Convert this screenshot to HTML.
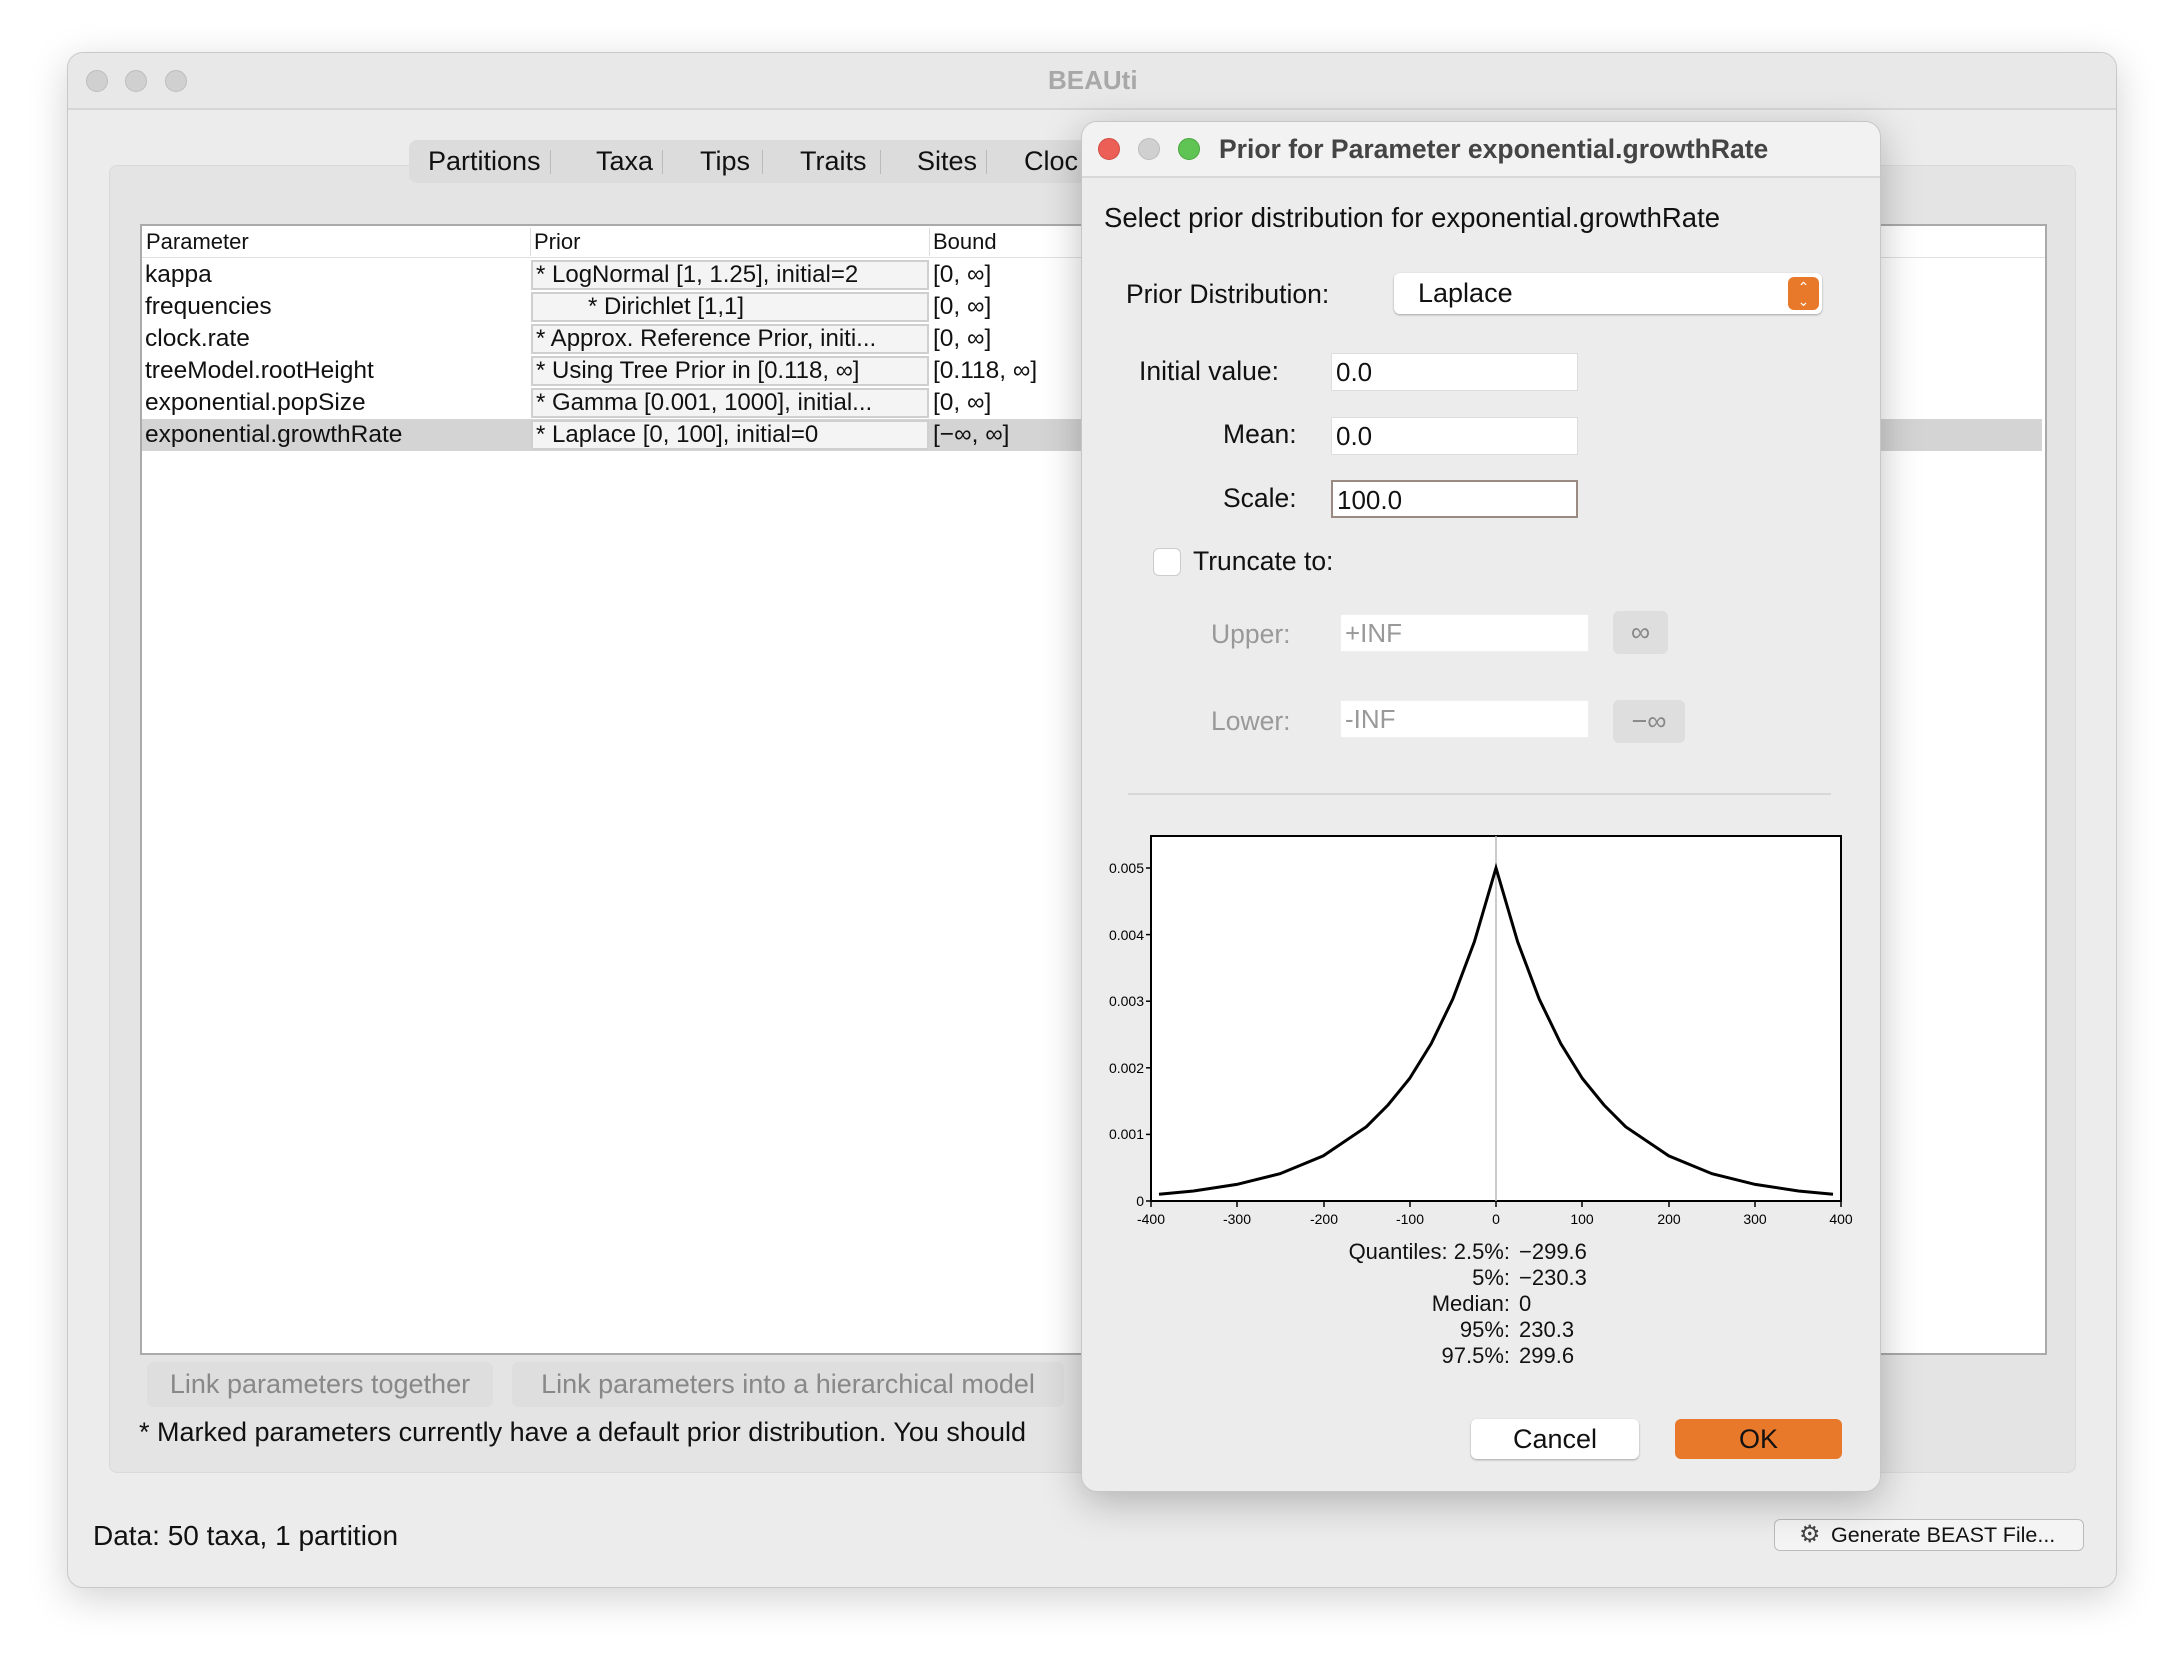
<!DOCTYPE html>
<html><head><meta charset="utf-8"><style>
*{box-sizing:border-box;margin:0;padding:0}
body{width:2184px;height:1672px;background:#fff;font-family:"Liberation Sans",sans-serif;position:relative;overflow:hidden;color:#111}
.a{position:absolute;white-space:nowrap}
.win{left:67px;top:52px;width:2050px;height:1536px;background:#ececec;border:1px solid #c8c8c8;border-radius:16px;box-shadow:0 10px 40px rgba(0,0,0,.18);overflow:hidden}
.tl{width:22px;height:22px;border-radius:50%;background:#d0d0d0;border:1px solid #bdbdbd}
.row{height:32px;font-size:24.5px;line-height:32px}
.pc{background:#f4f4f4;border:2px solid #cfcfcf;height:30px;line-height:26px;font-size:24px;padding-left:3px;overflow:hidden}
.lbl{font-size:26.5px}
.fld{background:#fff;border:1px solid #ddd;height:38px;font-size:26px;line-height:36px;padding-left:4px}
.btn{background:#dedede;border-radius:6px;color:#888;font-size:27px;text-align:center}
</style></head><body>
<div class="a win">
  <div class="a" style="left:0;top:0;width:2050px;height:57px;border-bottom:2px solid #d6d6d6;background:#e8e8e8"></div>
  <div class="a tl" style="left:18px;top:17px"></div>
  <div class="a tl" style="left:57px;top:17px"></div>
  <div class="a tl" style="left:97px;top:17px"></div>
  <div class="a" style="left:980px;top:12px;font-size:26px;font-weight:bold;color:#a8a8a8">BEAUti</div>
  <div class="a" style="left:41px;top:112px;width:1967px;height:1308px;background:#e4e4e4;border-radius:8px;border:1px solid #dadada"></div>
  <div class="a" style="left:341px;top:87px;width:760px;height:43px;background:#dcdcdc;border-radius:8px;font-size:27px;line-height:43px">
    <span class="a" style="left:19px">Partitions</span>
    <span class="a" style="left:141px;top:10px;width:1px;height:24px;background:#bbb"></span>
    <span class="a" style="left:187px">Taxa</span>
    <span class="a" style="left:253px;top:10px;width:1px;height:24px;background:#bbb"></span>
    <span class="a" style="left:291px">Tips</span>
    <span class="a" style="left:353px;top:10px;width:1px;height:24px;background:#bbb"></span>
    <span class="a" style="left:391px">Traits</span>
    <span class="a" style="left:471px;top:10px;width:1px;height:24px;background:#bbb"></span>
    <span class="a" style="left:508px">Sites</span>
    <span class="a" style="left:577px;top:10px;width:1px;height:24px;background:#bbb"></span>
    <span class="a" style="left:615px">Cloc</span>
  </div>
  <div class="a" style="left:72px;top:171px;width:1907px;height:1131px;background:#fff;border:2px solid #aaa"></div>
  <div class="a" style="left:74px;top:173px;width:1903px;height:32px;border-bottom:1px solid #e0e0e0;font-size:22px;line-height:32px">
    <span class="a" style="left:4px">Parameter</span>
    <span class="a" style="left:388px;top:2px;width:1px;height:28px;background:#ddd"></span>
    <span class="a" style="left:392px">Prior</span>
    <span class="a" style="left:787px;top:2px;width:1px;height:28px;background:#ddd"></span>
    <span class="a" style="left:791px">Bound</span>
  </div>
  <div class="a" style="left:74px;top:366px;width:1900px;height:32px;background:#d4d4d4"></div>
  <div class="a" style="left:74px;top:206px;width:900px">
    <div class="a row" style="left:3px;top:0">kappa</div>
    <div class="a row" style="left:3px;top:32px">frequencies</div>
    <div class="a row" style="left:3px;top:64px">clock.rate</div>
    <div class="a row" style="left:3px;top:96px">treeModel.rootHeight</div>
    <div class="a row" style="left:3px;top:128px">exponential.popSize</div>
    <div class="a row" style="left:3px;top:160px">exponential.growthRate</div>
    <div class="a pc" style="left:389px;top:1px;width:398px">* LogNormal [1, 1.25], initial=2</div>
    <div class="a pc" style="left:389px;top:33px;width:398px;padding-left:55px">* Dirichlet [1,1]</div>
    <div class="a pc" style="left:389px;top:65px;width:398px">* Approx. Reference Prior, initi...</div>
    <div class="a pc" style="left:389px;top:97px;width:398px">* Using Tree Prior in [0.118, ∞]</div>
    <div class="a pc" style="left:389px;top:129px;width:398px">* Gamma [0.001, 1000], initial...</div>
    <div class="a pc" style="left:389px;top:161px;width:398px">* Laplace [0, 100], initial=0</div>
    <div class="a row" style="left:791px;top:0">[0, ∞]</div>
    <div class="a row" style="left:791px;top:32px">[0, ∞]</div>
    <div class="a row" style="left:791px;top:64px">[0, ∞]</div>
    <div class="a row" style="left:791px;top:96px">[0.118, ∞]</div>
    <div class="a row" style="left:791px;top:128px">[0, ∞]</div>
    <div class="a row" style="left:791px;top:160px">[−∞, ∞]</div>
  </div>
  <div class="a btn" style="left:79px;top:1309px;width:346px;height:45px;line-height:45px">Link parameters together</div>
  <div class="a btn" style="left:444px;top:1309px;width:552px;height:45px;line-height:45px">Link parameters into a hierarchical model</div>
  <div class="a" style="left:71px;top:1364px;font-size:27px">* Marked parameters currently have a default prior distribution. You should</div>
  <div class="a" style="left:25px;top:1467px;font-size:28px">Data: 50 taxa, 1 partition</div>
  <div class="a" style="left:1706px;top:1466px;width:310px;height:32px;border:1px solid #bbb;border-radius:6px;background:#f4f4f4;font-size:21.5px;line-height:30px;padding-left:56px">Generate BEAST File...</div>
  <div class="a" style="left:1731px;top:1472px;font-size:24px;line-height:20px;color:#444">⚙</div>
</div>

<div class="a" style="left:1081px;top:121px;width:800px;height:1371px;background:#ececec;border:1px solid #c6c6c6;border-radius:16px;box-shadow:0 10px 40px rgba(0,0,0,.25);overflow:hidden">
  <div class="a" style="left:0;top:0;width:800px;height:56px;background:#f2f2f2;border-bottom:2px solid #d8d8d8"></div>
  <div class="a tl" style="left:16px;top:16px;background:#ec5f57;border-color:#d14c45"></div>
  <div class="a tl" style="left:56px;top:16px"></div>
  <div class="a tl" style="left:96px;top:16px;background:#5fc454;border-color:#4aa63e"></div>
  <div class="a" style="left:137px;top:12px;font-size:26.5px;font-weight:bold;color:#444">Prior for Parameter exponential.growthRate</div>
  <div class="a" style="left:22px;top:80px;font-size:27.5px">Select prior distribution for exponential.growthRate</div>
  <div class="a lbl" style="left:44px;top:157px">Prior Distribution:</div>
  <div class="a" style="left:312px;top:151px;width:428px;height:41px;background:#fff;border-radius:6px;box-shadow:0 1px 2px rgba(0,0,0,.3);font-size:27px;line-height:41px;padding-left:24px">Laplace</div>
  <div class="a" style="left:706px;top:155px;width:31px;height:33px;background:#e8782a;border-radius:6px;color:#fff;font-size:14px;line-height:14px;text-align:center;padding-top:3px">⌃<br>⌄</div>
  <div class="a lbl" style="left:57px;top:234px">Initial value:</div>
  <div class="a fld" style="left:249px;top:231px;width:247px">0.0</div>
  <div class="a lbl" style="left:141px;top:297px">Mean:</div>
  <div class="a fld" style="left:249px;top:295px;width:247px">0.0</div>
  <div class="a lbl" style="left:141px;top:361px">Scale:</div>
  <div class="a fld" style="left:249px;top:358px;width:247px;border:2px solid #9b8a82">100.0</div>
  <div class="a" style="left:71px;top:426px;width:28px;height:28px;background:#fff;border:1px solid #ccc;border-radius:6px"></div>
  <div class="a lbl" style="left:111px;top:424px">Truncate to:</div>
  <div class="a lbl" style="left:129px;top:497px;color:#999">Upper:</div>
  <div class="a fld" style="left:258px;top:492px;width:249px;color:#999;border-color:#eee">+INF</div>
  <div class="a btn" style="left:531px;top:489px;width:55px;height:43px;line-height:43px">∞</div>
  <div class="a lbl" style="left:129px;top:584px;color:#999">Lower:</div>
  <div class="a fld" style="left:258px;top:578px;width:249px;color:#999;border-color:#eee">-INF</div>
  <div class="a btn" style="left:531px;top:578px;width:72px;height:43px;line-height:43px">−∞</div>
  <div class="a" style="left:46px;top:671px;width:703px;height:2px;background:#d8d8d8"></div>
  <div class="a" style="left:128px;top:1117px;font-size:22px;line-height:26px;text-align:right;width:300px">Quantiles: 2.5%:<br>5%:<br>Median:<br>95%:<br>97.5%:</div>
  <div class="a" style="left:437px;top:1117px;font-size:22px;line-height:26px">−299.6<br>−230.3<br>0<br>230.3<br>299.6</div>
  <div class="a" style="left:389px;top:1297px;width:168px;height:40px;background:#fff;border-radius:6px;box-shadow:0 1px 2px rgba(0,0,0,.3);font-size:27px;line-height:40px;text-align:center">Cancel</div>
  <div class="a" style="left:593px;top:1297px;width:167px;height:40px;background:#e8782a;border-radius:6px;font-size:27px;line-height:40px;text-align:center">OK</div>
</div>
<svg class="a" style="left:0;top:0" width="2184" height="1672" font-family="Liberation Sans" font-size="14">
  <rect x="1151" y="836" width="690" height="365" fill="#fff" stroke="#000" stroke-width="2"/>
  <line x1="1496" y1="836" x2="1496" y2="1201" stroke="#bbb" stroke-width="1.5"/>
  <polyline fill="none" stroke="#000" stroke-width="3" points="1159,1194.3 1193.6,1191 1236.8,1184.4 1280,1173.7 1323.2,1155.9 1366.4,1126.7 1388,1105 1409.6,1078.5 1431.2,1043.7 1452.8,999 1474.4,941.7 1496,868 1517.6,941.7 1539.2,999 1560.8,1043.7 1582.4,1078.5 1604,1105 1625.6,1126.7 1668.8,1155.9 1712,1173.7 1755.2,1184.4 1798.4,1191 1833,1194.3"/>
  <g stroke="#000" stroke-width="1.5">
    <line x1="1146" y1="1201" x2="1151" y2="1201"/><line x1="1146" y1="1134.4" x2="1151" y2="1134.4"/><line x1="1146" y1="1067.8" x2="1151" y2="1067.8"/><line x1="1146" y1="1001.2" x2="1151" y2="1001.2"/><line x1="1146" y1="934.6" x2="1151" y2="934.6"/><line x1="1146" y1="868" x2="1151" y2="868"/>
    <line x1="1151" y1="1201" x2="1151" y2="1207"/><line x1="1237" y1="1201" x2="1237" y2="1207"/><line x1="1324" y1="1201" x2="1324" y2="1207"/><line x1="1410" y1="1201" x2="1410" y2="1207"/><line x1="1496" y1="1201" x2="1496" y2="1207"/><line x1="1582" y1="1201" x2="1582" y2="1207"/><line x1="1669" y1="1201" x2="1669" y2="1207"/><line x1="1755" y1="1201" x2="1755" y2="1207"/><line x1="1841" y1="1201" x2="1841" y2="1207"/>
  </g>
  <g text-anchor="end">
    <text x="1144" y="1206">0</text><text x="1144" y="1139">0.001</text><text x="1144" y="1073">0.002</text><text x="1144" y="1006">0.003</text><text x="1144" y="940">0.004</text><text x="1144" y="873">0.005</text>
  </g>
  <g text-anchor="middle">
    <text x="1151" y="1224">-400</text><text x="1237" y="1224">-300</text><text x="1324" y="1224">-200</text><text x="1410" y="1224">-100</text><text x="1496" y="1224">0</text><text x="1582" y="1224">100</text><text x="1669" y="1224">200</text><text x="1755" y="1224">300</text><text x="1841" y="1224">400</text>
  </g>
</svg>
</body></html>
